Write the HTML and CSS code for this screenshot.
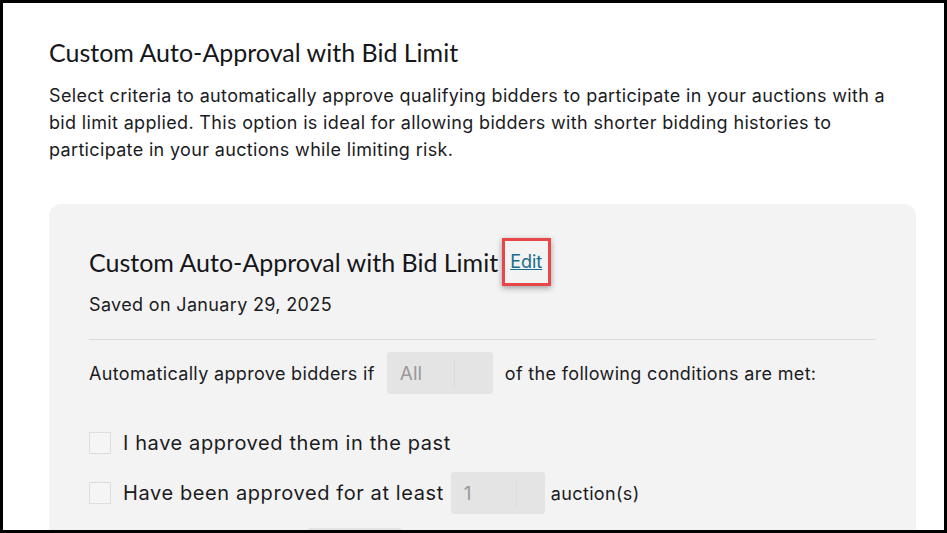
FILE: index.html
```html
<!DOCTYPE html>
<html lang="en">
<head>
    <meta charset="UTF-8">
    <title>Custom Auto-Approval with Bid Limit</title>
    <link rel="stylesheet" href="styles.css">
</head>
<body>
    <div class="frame">
        <section class="intro">
            <h1>Custom Auto-Approval with Bid Limit</h1>
            <p>Select criteria to automatically approve qualifying bidders to participate in your auctions with a bid limit applied. This option is ideal for allowing bidders with shorter bidding histories to participate in your auctions while limiting risk.</p>
        </section>

        <section class="panel">
            <div class="panel-head">
                <h2>Custom Auto-Approval with Bid Limit</h2>
                <span class="highlight"><a href="#">Edit</a></span>
            </div>
            <p class="saved">Saved on January 29, 2025</p>
            <hr>
            <div class="rule-line">
                Automatically approve bidders if
                <div class="select-box"><span>All</span><i></i></div>
                of the following conditions are met:
            </div>

            <label class="check-row">
                <span class="check"></span>
                I have approved them in the past
            </label>
            <label class="check-row">
                <span class="check"></span>
                Have been approved for at least
                <div class="select-box small"><span>1</span><i></i></div>
                <small>auction(s)</small>
            </label>
            <!-- next row is cut off by the window, only its input peeks in -->
            <div class="check-row last">
                <span class="check"></span>
                <span class="label-space"></span>
                <div class="select-box small"><span></span><i></i></div>
            </div>
        </section>
    </div>
</body>
</html>
```

FILE: styles.css
```css
html, body {
    margin: 0;
    padding: 0;
    height: 100%;
}
body {
    font-family: Inter, "Liberation Sans", sans-serif;
    color: #1b1b1f;
    background-color: #fff;
}
.frame {
    box-sizing: border-box;
    height: 100vh;
    border: 3px solid #000;
    overflow: hidden;
    padding: 0 28px 0 46px;
}
.intro {
    padding-top: 34px;
}
h1, h2 {
    font-family: Lato, "Open Sans", sans-serif;
    font-weight: 400;
    font-size: 25px;
    margin: 0;
    color: #16161a;
}
.intro p {
    font-size: 18px;
    line-height: 27px;
    letter-spacing: 0.34px;
    margin: 15px 0 0 0;
}
.panel {
    margin-top: 41px;
    background-color: #f3f3f3;
    border-radius: 12px;
    padding: 34px 40px 40px 40px;
}
.panel-head {
    display: flex;
    align-items: center;
    gap: 4px;
}
.highlight {
    border: 3px solid #e8474a;
    padding: 11px 6px 11px 5px;
    line-height: 19px;
    box-shadow: 0 2px 6px rgba(0, 0, 0, 0.35);
}
.highlight a {
    color: #186c8c;
    font-size: 18px;
}
.saved {
    font-size: 18px;
    letter-spacing: 0.34px;
    margin: 8px 0 0 0;
}
hr {
    border: none;
    border-top: 1px solid #dcdcdc;
    margin: 24px 0 12px 0;
}
.rule-line {
    display: flex;
    align-items: center;
    gap: 12px;
    font-size: 18px;
    letter-spacing: 0.34px;
}
.select-box {
    display: flex;
    align-items: center;
    width: 106px;
    height: 42px;
    box-sizing: border-box;
    background-color: #e4e4e4;
    border-radius: 3px;
    padding-left: 13px;
    color: #9a9a9a;
    font-size: 19px;
    letter-spacing: 0;
}
.select-box span {
    flex: 1;
}
.select-box i {
    width: 1px;
    height: 28px;
    background-color: #dcdcdc;
    margin-right: 38px;
}
.select-box.small {
    width: 94px;
    margin: 0 -6px 0 -5px;
}
.select-box.small i {
    margin-right: 28px;
}
.check-row {
    display: flex;
    align-items: center;
    gap: 12px;
    font-size: 20px;
    letter-spacing: 0.6px;
    margin-top: 8px;
    min-height: 42px;
}
.rule-line + .check-row {
    margin-top: 28px;
}
.check-row.last {
    margin-top: 14px;
}
.label-space {
    width: 178px;
}
.check {
    width: 20px;
    height: 20px;
    border: 1px solid #dedede;
    background-color: #f5f5f5;
}
.check-row small {
    font-size: 18px;
    letter-spacing: 0.34px;
}
```
